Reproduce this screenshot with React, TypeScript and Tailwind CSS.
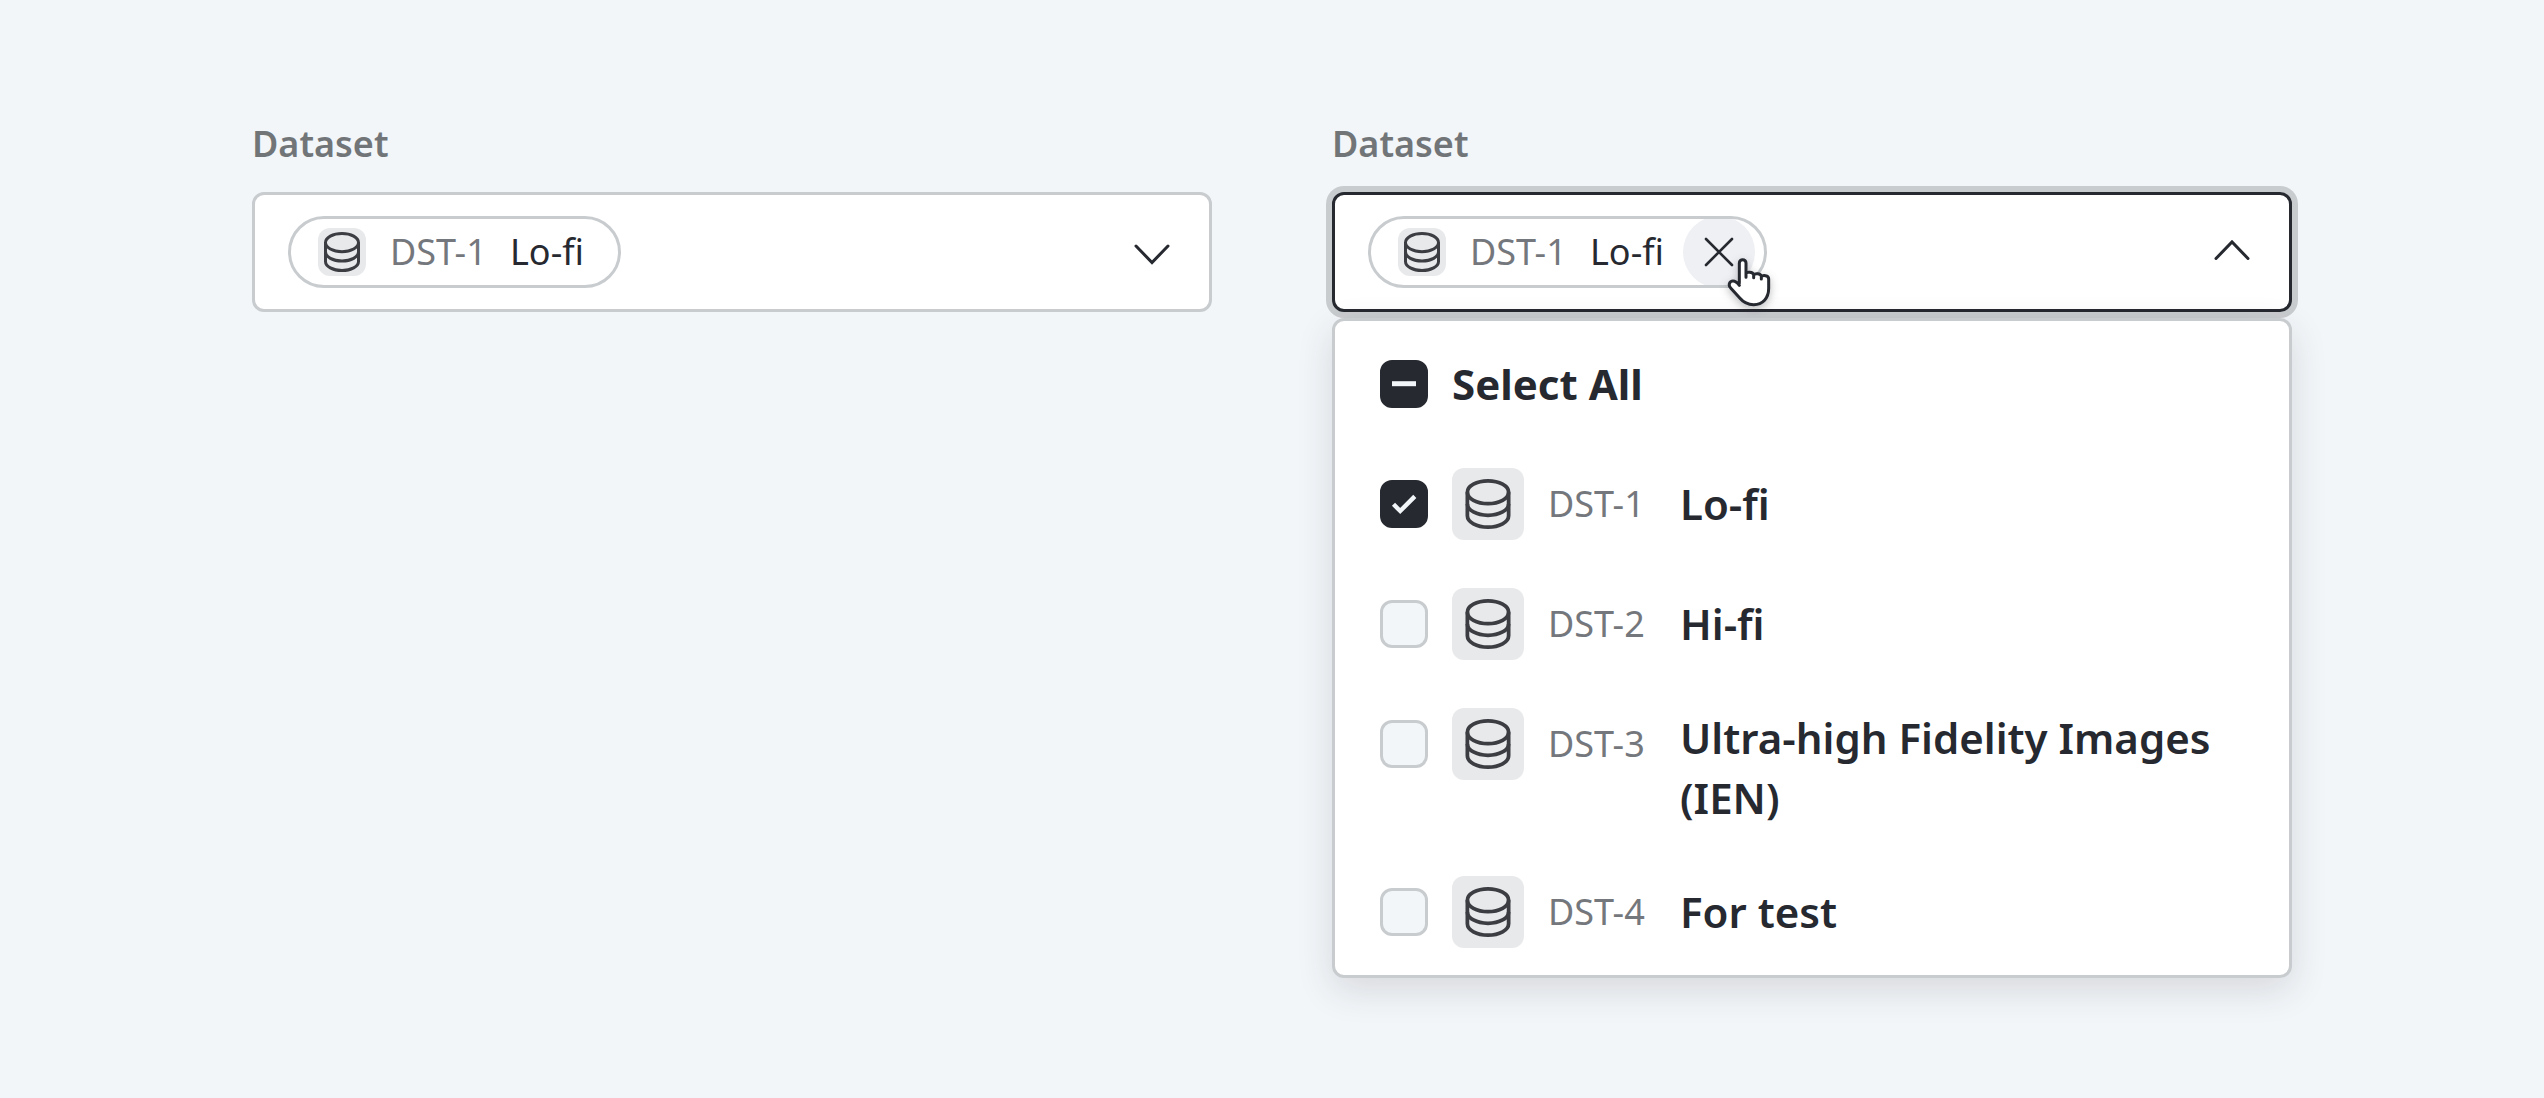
import { useEffect, useRef, useState } from "react";

type Dataset = {
  id: string;
  name: string;
};

const datasets: Dataset[] = [
  { id: "DST-1", name: "Lo-fi" },
  { id: "DST-2", name: "Hi-fi" },
  { id: "DST-3", name: "Ultra-high Fidelity Images (IEN)" },
  { id: "DST-4", name: "For test" },
];

function DatabaseIcon({ className }: { className: string }) {
  return (
    <svg viewBox="0 0 48 48" fill="none" stroke="currentColor" strokeWidth="3" className={className} aria-hidden="true">
      <ellipse cx="24" cy="14.6" rx="16.5" ry="9.1" />
      <path d="M7.5 14.6V33.4c0 5 7.4 9.1 16.5 9.1s16.5-4.1 16.5-9.1V14.6" />
      <path d="M7.5 23.9c0 5 7.4 9.1 16.5 9.1s16.5-4.1 16.5-9.1" />
    </svg>
  );
}

function Chevron({ open }: { open: boolean }) {
  return (
    <svg
      viewBox="0 0 48 48"
      fill="none"
      stroke="currentColor"
      strokeWidth="3"
      strokeLinecap="round"
      className="size-12"
      aria-hidden="true"
    >
      <path d={open ? "M8 30.5 24 14l16 16.5" : "M8 18l16 16.5L40 18"} />
    </svg>
  );
}

function HandCursor() {
  return (
    <svg
      viewBox="200 168 141 156"
      className="pointer-events-none absolute top-10 -right-1.5 z-10 h-[52px] w-[47px] overflow-visible drop-shadow-[0_3px_4px_rgba(38,41,48,0.3)]"
      aria-hidden="true"
    >
      <path
        d="M240 250V189a10 10 0 0 1 20 0V232v-12c3-5 20-5 23 4v9v-8c4-6 20-5 23 3v9v-7c4-5 22-5 22 7V265c0 30-18 49-45 49c-18 0-31-7-41-19L214 264c-8-8-4-21 7-21c8 0 13 5 19 13"
        fill="#fff"
        stroke="#262930"
        strokeWidth="9"
        strokeLinecap="round"
        strokeLinejoin="round"
      />
    </svg>
  );
}

function Chip({ dataset, onRemove }: { dataset: Dataset; onRemove?: () => void }) {
  return (
    <div className="relative flex">
      <div
        className={`flex h-[72px] items-center overflow-hidden rounded-full border-[3px] border-[#c9cccf] pl-[27px] text-[36px] leading-[48px] ${onRemove ? "pr-[9px]" : "pr-[27px]"}`}
      >
        <span className="mr-6 flex size-12 items-center justify-center rounded-xl bg-[#e8e9eb] text-[#3c3d43]">
          <DatabaseIcon className="size-12" />
        </span>
        <span className="mr-3 min-w-[108px] text-[#74777c]">{dataset.id}</span>
        <span className="min-w-[81px] text-[#262930]">{dataset.name}</span>
        {onRemove && (
          <button
            type="button"
            aria-label={`Remove ${dataset.id}`}
            onClick={onRemove}
            className="ml-3 flex size-[72px] shrink-0 items-center justify-center rounded-full bg-[#eff0f4] text-[#262930]"
          >
            <svg
              viewBox="0 0 48 48"
              fill="none"
              stroke="currentColor"
              strokeWidth="2.6"
              strokeLinecap="round"
              className="size-12"
              aria-hidden="true"
            >
              <path d="M11 11l26 26M37 11 11 37" />
            </svg>
          </button>
        )}
      </div>
      {onRemove && <HandCursor />}
    </div>
  );
}

type CheckboxProps = {
  id: string;
  checked: boolean;
  indeterminate?: boolean;
  onChange: () => void;
};

function Checkbox({ id, checked, indeterminate = false, onChange }: CheckboxProps) {
  const ref = useRef<HTMLInputElement>(null);

  useEffect(() => {
    if (ref.current) {
      ref.current.indeterminate = indeterminate;
    }
  }, [indeterminate]);

  return (
    <span className="relative flex size-12 shrink-0">
      <input
        ref={ref}
        id={id}
        type="checkbox"
        checked={checked}
        onChange={onChange}
        className="size-12 appearance-none rounded-xl border-[3px] border-[#c9cccf] bg-[#f2f6f9] checked:border-[#262930] checked:bg-[#262930] indeterminate:border-[#262930] indeterminate:bg-[#262930]"
      />
      {(checked || indeterminate) && (
        <svg
          viewBox="0 0 48 48"
          fill="none"
          stroke="#f2f6f9"
          className="pointer-events-none absolute inset-0 size-12"
          aria-hidden="true"
        >
          {indeterminate ? (
            <path d="M12 23.7h24" strokeWidth="5" />
          ) : (
            <path d="M13.5 24.3 20.2 31 34.8 16.4" strokeWidth="4.4" />
          )}
        </svg>
      )}
    </span>
  );
}

type DatasetSelectProps = {
  id: string;
  initiallyOpen?: boolean;
};

function DatasetSelect({ id, initiallyOpen = false }: DatasetSelectProps) {
  const [open, setOpen] = useState(initiallyOpen);
  const [selected, setSelected] = useState<string[]>(["DST-1"]);

  const allSelected = selected.length === datasets.length;

  const toggle = (datasetId: string) => {
    setSelected((current) =>
      current.includes(datasetId) ? current.filter((item) => item !== datasetId) : [...current, datasetId],
    );
  };

  return (
    <section className="min-w-0">
      <label htmlFor={id} className="mb-6 block text-[36px] leading-[48px] font-semibold text-[#717578]">
        Dataset
      </label>

      <div
        className={`flex min-h-[120px] items-center justify-between gap-6 rounded-xl border-[3px] bg-white px-[33px] py-[21px] ${open ? "border-[#262930] ring-6 ring-[#c9cccf]" : "border-[#c9cccf]"}`}
      >
        <div className="flex flex-wrap gap-3">
          {datasets
            .filter((dataset) => selected.includes(dataset.id))
            .map((dataset) => (
              <Chip key={dataset.id} dataset={dataset} onRemove={open ? () => toggle(dataset.id) : undefined} />
            ))}
        </div>
        <button
          id={id}
          type="button"
          aria-expanded={open}
          onClick={() => setOpen(!open)}
          className="shrink-0 text-[#262930]"
        >
          <Chevron open={open} />
        </button>
      </div>

      {open && (
        <div className="mt-1.5 rounded-xl border-[3px] border-[#c9cccf] bg-white py-[3px] text-[42px] leading-[60px] font-semibold text-[#262930] shadow-[0_12px_36px_rgba(60,40,50,0.14)]">
          <div className="flex items-center gap-6 px-[45px] py-[30px]">
            <Checkbox
              id={`${id}-all`}
              checked={allSelected}
              indeterminate={selected.length > 0 && !allSelected}
              onChange={() => setSelected(allSelected ? [] : datasets.map((dataset) => dataset.id))}
            />
            <label htmlFor={`${id}-all`} className="font-bold">
              Select All
            </label>
          </div>

          <ul>
            {datasets.map((dataset) => (
              <li key={dataset.id} className="flex gap-6 px-[45px] py-6">
                <span className="flex h-[72px] items-center">
                  <Checkbox
                    id={`${id}-${dataset.id}`}
                    checked={selected.includes(dataset.id)}
                    onChange={() => toggle(dataset.id)}
                  />
                </span>
                <label htmlFor={`${id}-${dataset.id}`} className="flex min-w-0 gap-6">
                  <span className="flex size-[72px] shrink-0 items-center justify-center rounded-xl bg-[#e8e9eb] text-[#3c3d43]">
                    <DatabaseIcon className="size-[60px]" />
                  </span>
                  <span className="flex h-[72px] w-[108px] shrink-0 items-center text-[36px] font-normal text-[#74777c]">
                    {dataset.id}
                  </span>
                  <span className="flex min-h-[72px] items-center">{dataset.name}</span>
                </label>
              </li>
            ))}
          </ul>
        </div>
      )}
    </section>
  );
}

export default function App() {
  return (
    <main className="min-h-screen bg-[#f2f6f9] px-[252px] py-[120px] font-['Noto_Sans',sans-serif]">
      <div className="grid grid-cols-2 items-start gap-[120px]">
        <DatasetSelect id="dataset" />
        <DatasetSelect id="dataset-open" initiallyOpen />
      </div>
    </main>
  );
}
